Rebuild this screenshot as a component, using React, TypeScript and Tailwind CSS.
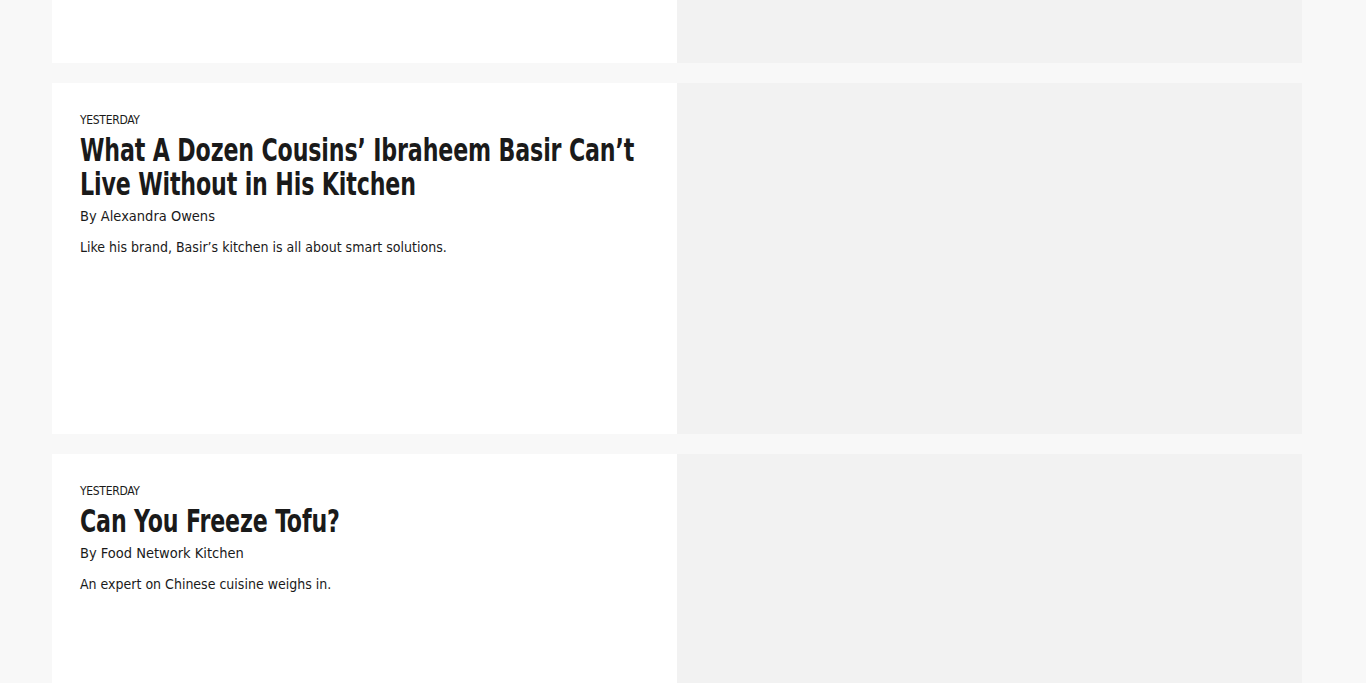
import React from "react";

type Story = {
  label: string;
  title: string;
  author: string;
  dek: string;
};

const stories: Story[] = [
  {
    label: "Yesterday",
    title: "What A Dozen Cousins’ Ibraheem Basir Can’t Live Without in His Kitchen",
    author: "Alexandra Owens",
    dek: "Like his brand, Basir’s kitchen is all about smart solutions.",
  },
  {
    label: "Yesterday",
    title: "Can You Freeze Tofu?",
    author: "Food Network Kitchen",
    dek: "An expert on Chinese cuisine weighs in.",
  },
];

const font = { fontFamily: '"DejaVu Sans Condensed", "Liberation Sans", sans-serif' };

export default function App() {
  return (
    <div className="min-h-screen bg-[#f8f8f8] overflow-hidden" style={font}>
      <div className="ml-[52px] w-[1250px] flex flex-col gap-5">
        {/* tail of the previous card, scrolled past */}
        <div className="grid grid-cols-2 h-[63px]">
          <div className="bg-white" />
          <div className="bg-[#f2f2f2]" />
        </div>

        {stories.map((s, i) => (
          <article key={i} className="grid grid-cols-2 h-[351px]">
            <div className="bg-white px-7 pt-[31px] text-[#1a1a1a]">
              <div className="text-[12px] uppercase leading-none tracking-[-0.3px]">{s.label}</div>
              {/* condensed headline face */}
              <h2 className="mt-[7px] w-[740px] origin-left scale-x-[0.77] text-[32px] font-bold leading-[34px] tracking-[-0.2px]">
                {s.title}
              </h2>
              <div className="mt-[5px] text-[14.5px] leading-[20px]">By {s.author}</div>
              <p className="mt-[11px] text-[14px] leading-[20px]">{s.dek}</p>
            </div>
            <div className="bg-[#f2f2f2]" />
          </article>
        ))}
      </div>
    </div>
  );
}
